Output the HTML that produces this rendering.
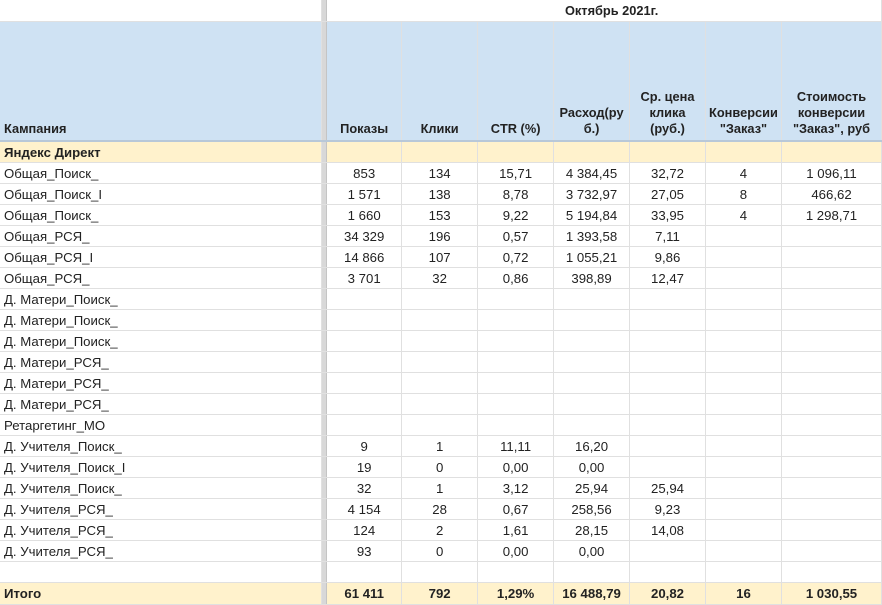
<!DOCTYPE html>
<html><head><meta charset="utf-8"><style>
body{margin:0;background:#fff;width:882px;height:604px;overflow:hidden;font-family:"Liberation Sans",Arial,sans-serif;font-size:13.2px;color:#222}
table{border-collapse:collapse;table-layout:fixed;position:absolute;left:0;top:0}
td{border-right:1px solid #e0e0e0;border-bottom:1px solid #e0e0e0;padding:0 3px;height:20px;text-align:center;white-space:nowrap;overflow:hidden}
td.n{text-align:left;padding-left:4px}
td.s{background:#d8d8d8;border-right:1px solid #c4c4c4;padding:0}
tr.h td{background:#cfe2f3;height:115px;vertical-align:bottom;font-weight:bold;white-space:normal;line-height:16px;padding-bottom:3px;border-bottom:2px solid #b8c8d8;font-size:12.8px}
tr.h td.s{background:#d8d8d8}
tr.y td{background:#fff2cc;font-weight:bold}
tr.y td.s{background:#d8d8d8}
tr.t td{height:21px}
</style></head><body>
<table>
<colgroup><col style="width:322px"><col style="width:5px"><col style="width:75px"><col style="width:76px"><col style="width:76px"><col style="width:76px"><col style="width:76px"><col style="width:76px"><col style="width:100px"></colgroup>
<tr class="t"><td></td><td class="s"></td><td colspan="7" style="font-weight:bold;text-align:center;padding-left:18px;font-size:12.8px">Октябрь 2021г.</td></tr>
<tr class="h"><td class="n">Кампания</td><td class="s"></td><td>Показы</td><td>Клики</td><td>CTR (%)</td><td>Расход(ру б.)</td><td>Ср. цена клика (руб.)</td><td>Конверсии "Заказ"</td><td>Стоимость конверсии "Заказ", руб</td></tr>
<tr class="y"><td class="n">Яндекс Директ</td><td class="s"></td><td></td><td></td><td></td><td></td><td></td><td></td><td></td></tr>
<tr><td class="n">Общая_Поиск_</td><td class="s"></td><td>853</td><td>134</td><td>15,71</td><td>4 384,45</td><td>32,72</td><td>4</td><td>1 096,11</td></tr>
<tr><td class="n">Общая_Поиск_I</td><td class="s"></td><td>1 571</td><td>138</td><td>8,78</td><td>3 732,97</td><td>27,05</td><td>8</td><td>466,62</td></tr>
<tr><td class="n">Общая_Поиск_</td><td class="s"></td><td>1 660</td><td>153</td><td>9,22</td><td>5 194,84</td><td>33,95</td><td>4</td><td>1 298,71</td></tr>
<tr><td class="n">Общая_РСЯ_</td><td class="s"></td><td>34 329</td><td>196</td><td>0,57</td><td>1 393,58</td><td>7,11</td><td></td><td></td></tr>
<tr><td class="n">Общая_РСЯ_I</td><td class="s"></td><td>14 866</td><td>107</td><td>0,72</td><td>1 055,21</td><td>9,86</td><td></td><td></td></tr>
<tr><td class="n">Общая_РСЯ_</td><td class="s"></td><td>3 701</td><td>32</td><td>0,86</td><td>398,89</td><td>12,47</td><td></td><td></td></tr>
<tr><td class="n">Д. Матери_Поиск_</td><td class="s"></td><td></td><td></td><td></td><td></td><td></td><td></td><td></td></tr>
<tr><td class="n">Д. Матери_Поиск_</td><td class="s"></td><td></td><td></td><td></td><td></td><td></td><td></td><td></td></tr>
<tr><td class="n">Д. Матери_Поиск_</td><td class="s"></td><td></td><td></td><td></td><td></td><td></td><td></td><td></td></tr>
<tr><td class="n">Д. Матери_РСЯ_</td><td class="s"></td><td></td><td></td><td></td><td></td><td></td><td></td><td></td></tr>
<tr><td class="n">Д. Матери_РСЯ_</td><td class="s"></td><td></td><td></td><td></td><td></td><td></td><td></td><td></td></tr>
<tr><td class="n">Д. Матери_РСЯ_</td><td class="s"></td><td></td><td></td><td></td><td></td><td></td><td></td><td></td></tr>
<tr><td class="n">Ретаргетинг_МО</td><td class="s"></td><td></td><td></td><td></td><td></td><td></td><td></td><td></td></tr>
<tr><td class="n">Д. Учителя_Поиск_</td><td class="s"></td><td>9</td><td>1</td><td>11,11</td><td>16,20</td><td></td><td></td><td></td></tr>
<tr><td class="n">Д. Учителя_Поиск_I</td><td class="s"></td><td>19</td><td>0</td><td>0,00</td><td>0,00</td><td></td><td></td><td></td></tr>
<tr><td class="n">Д. Учителя_Поиск_</td><td class="s"></td><td>32</td><td>1</td><td>3,12</td><td>25,94</td><td>25,94</td><td></td><td></td></tr>
<tr><td class="n">Д. Учителя_РСЯ_</td><td class="s"></td><td>4 154</td><td>28</td><td>0,67</td><td>258,56</td><td>9,23</td><td></td><td></td></tr>
<tr><td class="n">Д. Учителя_РСЯ_</td><td class="s"></td><td>124</td><td>2</td><td>1,61</td><td>28,15</td><td>14,08</td><td></td><td></td></tr>
<tr><td class="n">Д. Учителя_РСЯ_</td><td class="s"></td><td>93</td><td>0</td><td>0,00</td><td>0,00</td><td></td><td></td><td></td></tr>
<tr><td class="n"></td><td class="s"></td><td></td><td></td><td></td><td></td><td></td><td></td><td></td></tr>
<tr class="y t"><td class="n">Итого</td><td class="s"></td><td>61 411</td><td>792</td><td>1,29%</td><td>16 488,79</td><td>20,82</td><td>16</td><td>1 030,55</td></tr>
</table>
</body></html>
